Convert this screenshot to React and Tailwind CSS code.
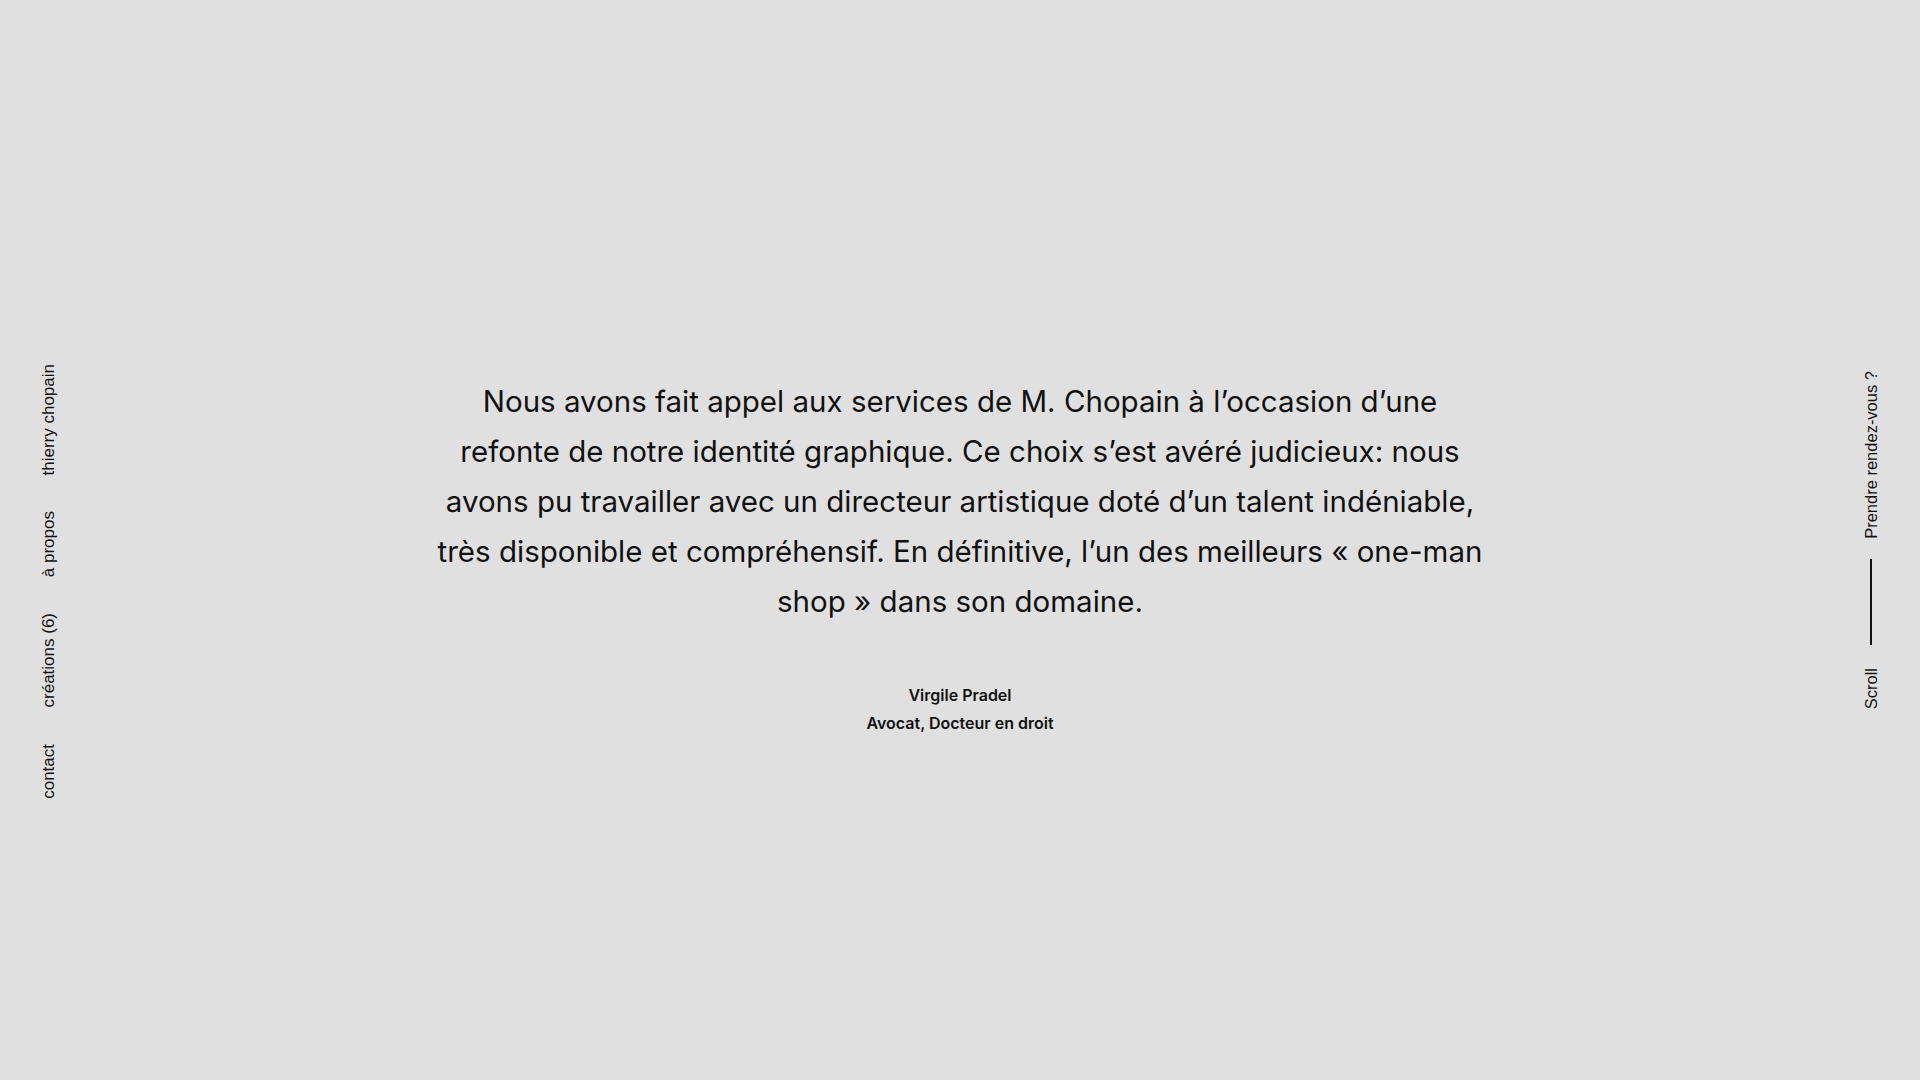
import React from "react";

const navItems = ["thierry chopain", "à propos", "créations (6)", "contact"];

const Vertical = ({ children }) => (
  <span className="[writing-mode:vertical-rl] rotate-180 whitespace-nowrap">{children}</span>
);

const App = () => {
  return (
    <div className="flex h-[1080px] w-full bg-[#e0e0e0] text-[#111] overflow-hidden">
      {/* navigation gauche */}
      <aside className="flex w-[98px] flex-col items-center justify-center gap-9 pt-[82px] font-['Liberation_Sans',Arial,sans-serif] text-[17px] leading-[22px]">
        {navItems.map((item) => (
          <Vertical key={item}>{item}</Vertical>
        ))}
      </aside>

      {/* témoignage */}
      <main className="flex flex-1 flex-col items-center justify-center pt-[32px] font-['Inter',sans-serif]">
        <p className="text-center text-[29.5px] leading-[50px]">
          Nous avons fait appel aux services de M. Chopain à l’occasion d’une
          <br />
          refonte de notre identité graphique. Ce choix s’est avéré judicieux: nous
          <br />
          avons pu travailler avec un directeur artistique doté d’un talent indéniable,
          <br />
          très disponible et compréhensif. En définitive, l’un des meilleurs « one-man
          <br />
          shop » dans son domaine.
        </p>
        <div className="mt-[55px] text-center text-[16px] font-semibold leading-[28px]">
          <div>Virgile Pradel</div>
          <div>Avocat, Docteur en droit</div>
        </div>
      </main>

      {/* navigation droite */}
      <aside className="flex w-[98px] flex-col items-center justify-center font-['Liberation_Sans',Arial,sans-serif] text-[16.5px] leading-[22px]">
        <Vertical>Prendre rendez-vous ?</Vertical>
        <span className="mt-5 mb-[23px] h-[86px] w-[2px] bg-[#111]" />
        <Vertical>Scroll</Vertical>
      </aside>
    </div>
  );
};

export default App;
